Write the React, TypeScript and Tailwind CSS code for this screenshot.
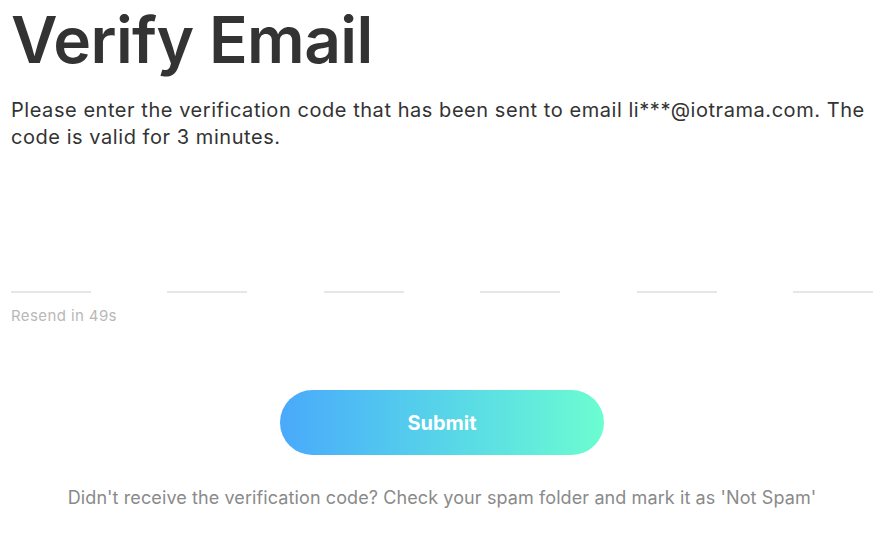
export default function App() {
  const slots = [0, 1, 2, 3, 4, 5]

  return (
    <div className="h-[544px] w-[886px] bg-white pl-[11px] pr-[13px] font-['Inter',sans-serif]">
      <h1 className="pt-[2px] text-[64px] font-semibold leading-[76px] tracking-[-0.6px] text-[#333333]">Verify Email</h1>
      <p className="mt-[19px] text-[20px] leading-[27px] tracking-[0.55px] text-[#333333]">
        Please enter the verification code that has been sent to email li***@iotrama.com. The code is valid for 3 minutes.
      </p>
      <div className="mt-[140px] flex justify-between">
        {slots.map((i) => (
          <div key={i} className="h-[2px] w-[80px] bg-[#e6e6e6]" />
        ))}
      </div>
      <div className="mt-[13px] text-[15px] leading-[20px] tracking-[0.4px] text-[#b8b8b8]">Resend in 49s</div>
      <div className="mt-[64px] flex justify-center">
        <button className="h-[65px] w-[324px] rounded-full bg-gradient-to-r from-[#4aa9fb] to-[#6cfdd0] text-[20px] font-bold text-white">
          Submit
        </button>
      </div>
      <p className="mt-[31px] text-center text-[18px] leading-[24px] tracking-[0.1px] text-[#8a8a8a]">
        Didn&apos;t receive the verification code? Check your spam folder and mark it as &apos;Not Spam&apos;
      </p>
    </div>
  )
}
